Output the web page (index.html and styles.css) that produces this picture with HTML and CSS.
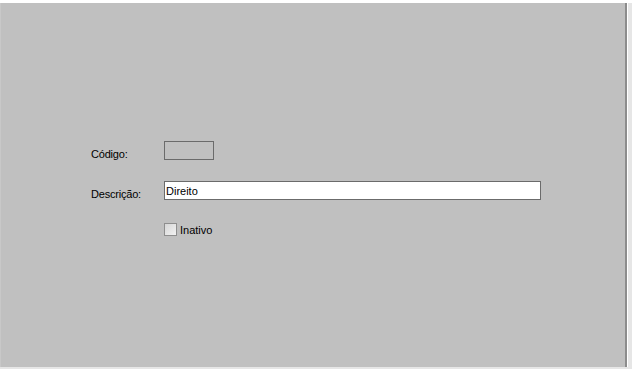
FILE: index.html
```html
<!DOCTYPE html>
<html lang="pt-BR">
<head>
  <meta charset="UTF-8" />
  <title>Cadastro</title>
  <link rel="stylesheet" href="styles.css">
</head>
<body>
  <div class="frame">
    <div class="panel">
      <form class="form">
        <label class="label" for="codigo">Código:</label>
        <input id="codigo" class="field field-code" type="text" disabled />

        <label class="label" for="descricao">Descrição:</label>
        <input id="descricao" class="field field-desc" type="text" value="Direito" />

        <span></span>
        <label class="check">
          <span class="box"></span>
          <span>Inativo</span>
        </label>
      </form>
    </div>
  </div>
</body>
</html>
```

FILE: styles.css
```css
:root {
  --bg: #c0c0c0;
  --border: #6b6b6b;
  --text: #000;
}

*, *::before, *::after {
  box-sizing: border-box;
}
body {
  margin: 0;
  background: #fff;
  font-family: 'Liberation Sans', Arial, sans-serif;
  font-size: 11px;
  color: var(--text);
}

.frame {
  margin-top: 3px;
  height: 366px;
  width: 632px;
  display: flex;
  background: #e6e6e6;
}
.panel {
  width: 627px;
  height: 364px;
  background: var(--bg);
  border-left: 1px solid #c8c8c8;
  border-right: 2px solid #8c8c8c;
  box-shadow: 1px 0 0 #fff;
  padding: 138px 0 0 90px;
}

.form {
  display: grid;
  grid-template-columns: 73px auto;
  grid-template-rows: 19px 19px 13px;
  row-gap: 21px;
  align-items: center;
}
.form > :nth-child(n+5) {
  margin-top: 4px;
}

.label {
  padding-top: 6px;
  letter-spacing: -0.2px;
}

.field {
  height: 19px;
  margin: 0;
  border: 1px solid var(--border);
  font: inherit;
  padding: 0 0 0 1px;
  outline: none;
}
.field-code {
  width: 50px;
  background: var(--bg);
}
.field-desc {
  width: 377px;
  background: #fff;
  color: var(--text);
}

.check {
  display: flex;
  align-items: center;
  gap: 3px;
  height: 13px;
}
.box {
  width: 13px;
  height: 13px;
  border: 1px solid #8e8e8e;
  background: linear-gradient(135deg, #d6d6d6, #f2f2f2);
}
```
